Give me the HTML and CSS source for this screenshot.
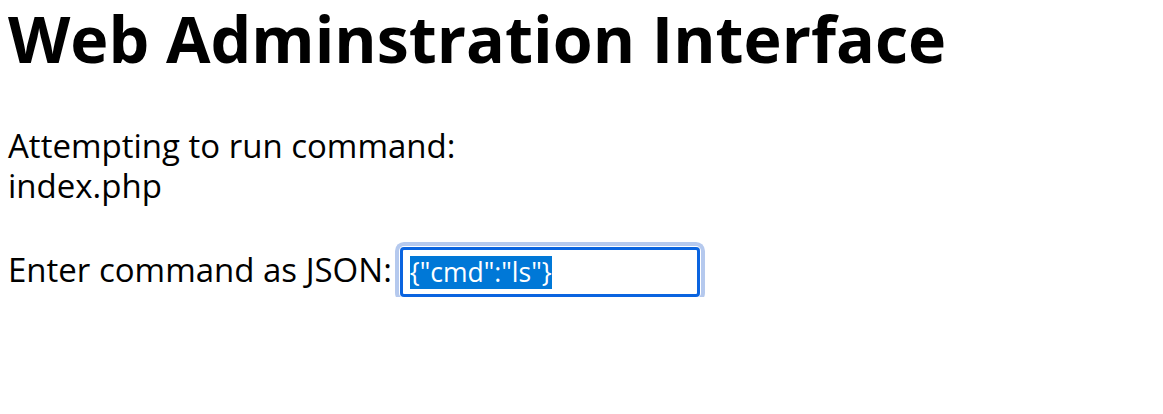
FILE: index.html
```html
<!DOCTYPE html>
<html lang="en">
<head>
<meta charset="utf-8">
<title>Web Adminstration Interface</title>
<link rel="stylesheet" href="styles.css">
</head>
<body>
<h1 class="title">Web Adminstration Interface</h1>
<p class="status">Attempting to run command:<br>index.php</p>
<form class="cmd-form">
  <label class="cmd-label" for="cmd">Enter command as JSON:</label>
  <div class="cmd-input" id="cmd"><span class="cmd-selected">{"cmd":"ls"}</span></div>
</form>
</body>
</html>
```
FILE: styles.css
```css
html, body {
  margin: 0;
  background: #fff;
}
body {
  padding: 0 8px;
  font-family: "Open Sans", "Noto Sans", sans-serif;
  color: #000;
}
.title {
  margin: 0;
  font-size: 64.5px;
  line-height: 76px;
  font-weight: 700;
  white-space: nowrap;
}
.status {
  margin: 50px 0 0;
  font-size: 33px;
  line-height: 40px;
}
.cmd-form {
  display: flex;
  align-items: center;
  gap: 8px;
  margin-top: 41px;
  font-size: 33px;
  line-height: 40px;
}
.cmd-label {
  padding-bottom: 4px;
}
.cmd-input {
  box-sizing: border-box;
  width: 300px;
  height: 50px;
  border: 3px solid #0a64e0;
  border-radius: 4px;
  box-shadow: 0 0 0 1px #fff, 0 0 0 5px #b5c9ee;
  padding: 5px 7px;
  display: flex;
  align-items: center;
  font-size: 26.5px;
  line-height: 33px;
}
.cmd-selected {
  background: #0078d7;
  color: #fff;
}
```
